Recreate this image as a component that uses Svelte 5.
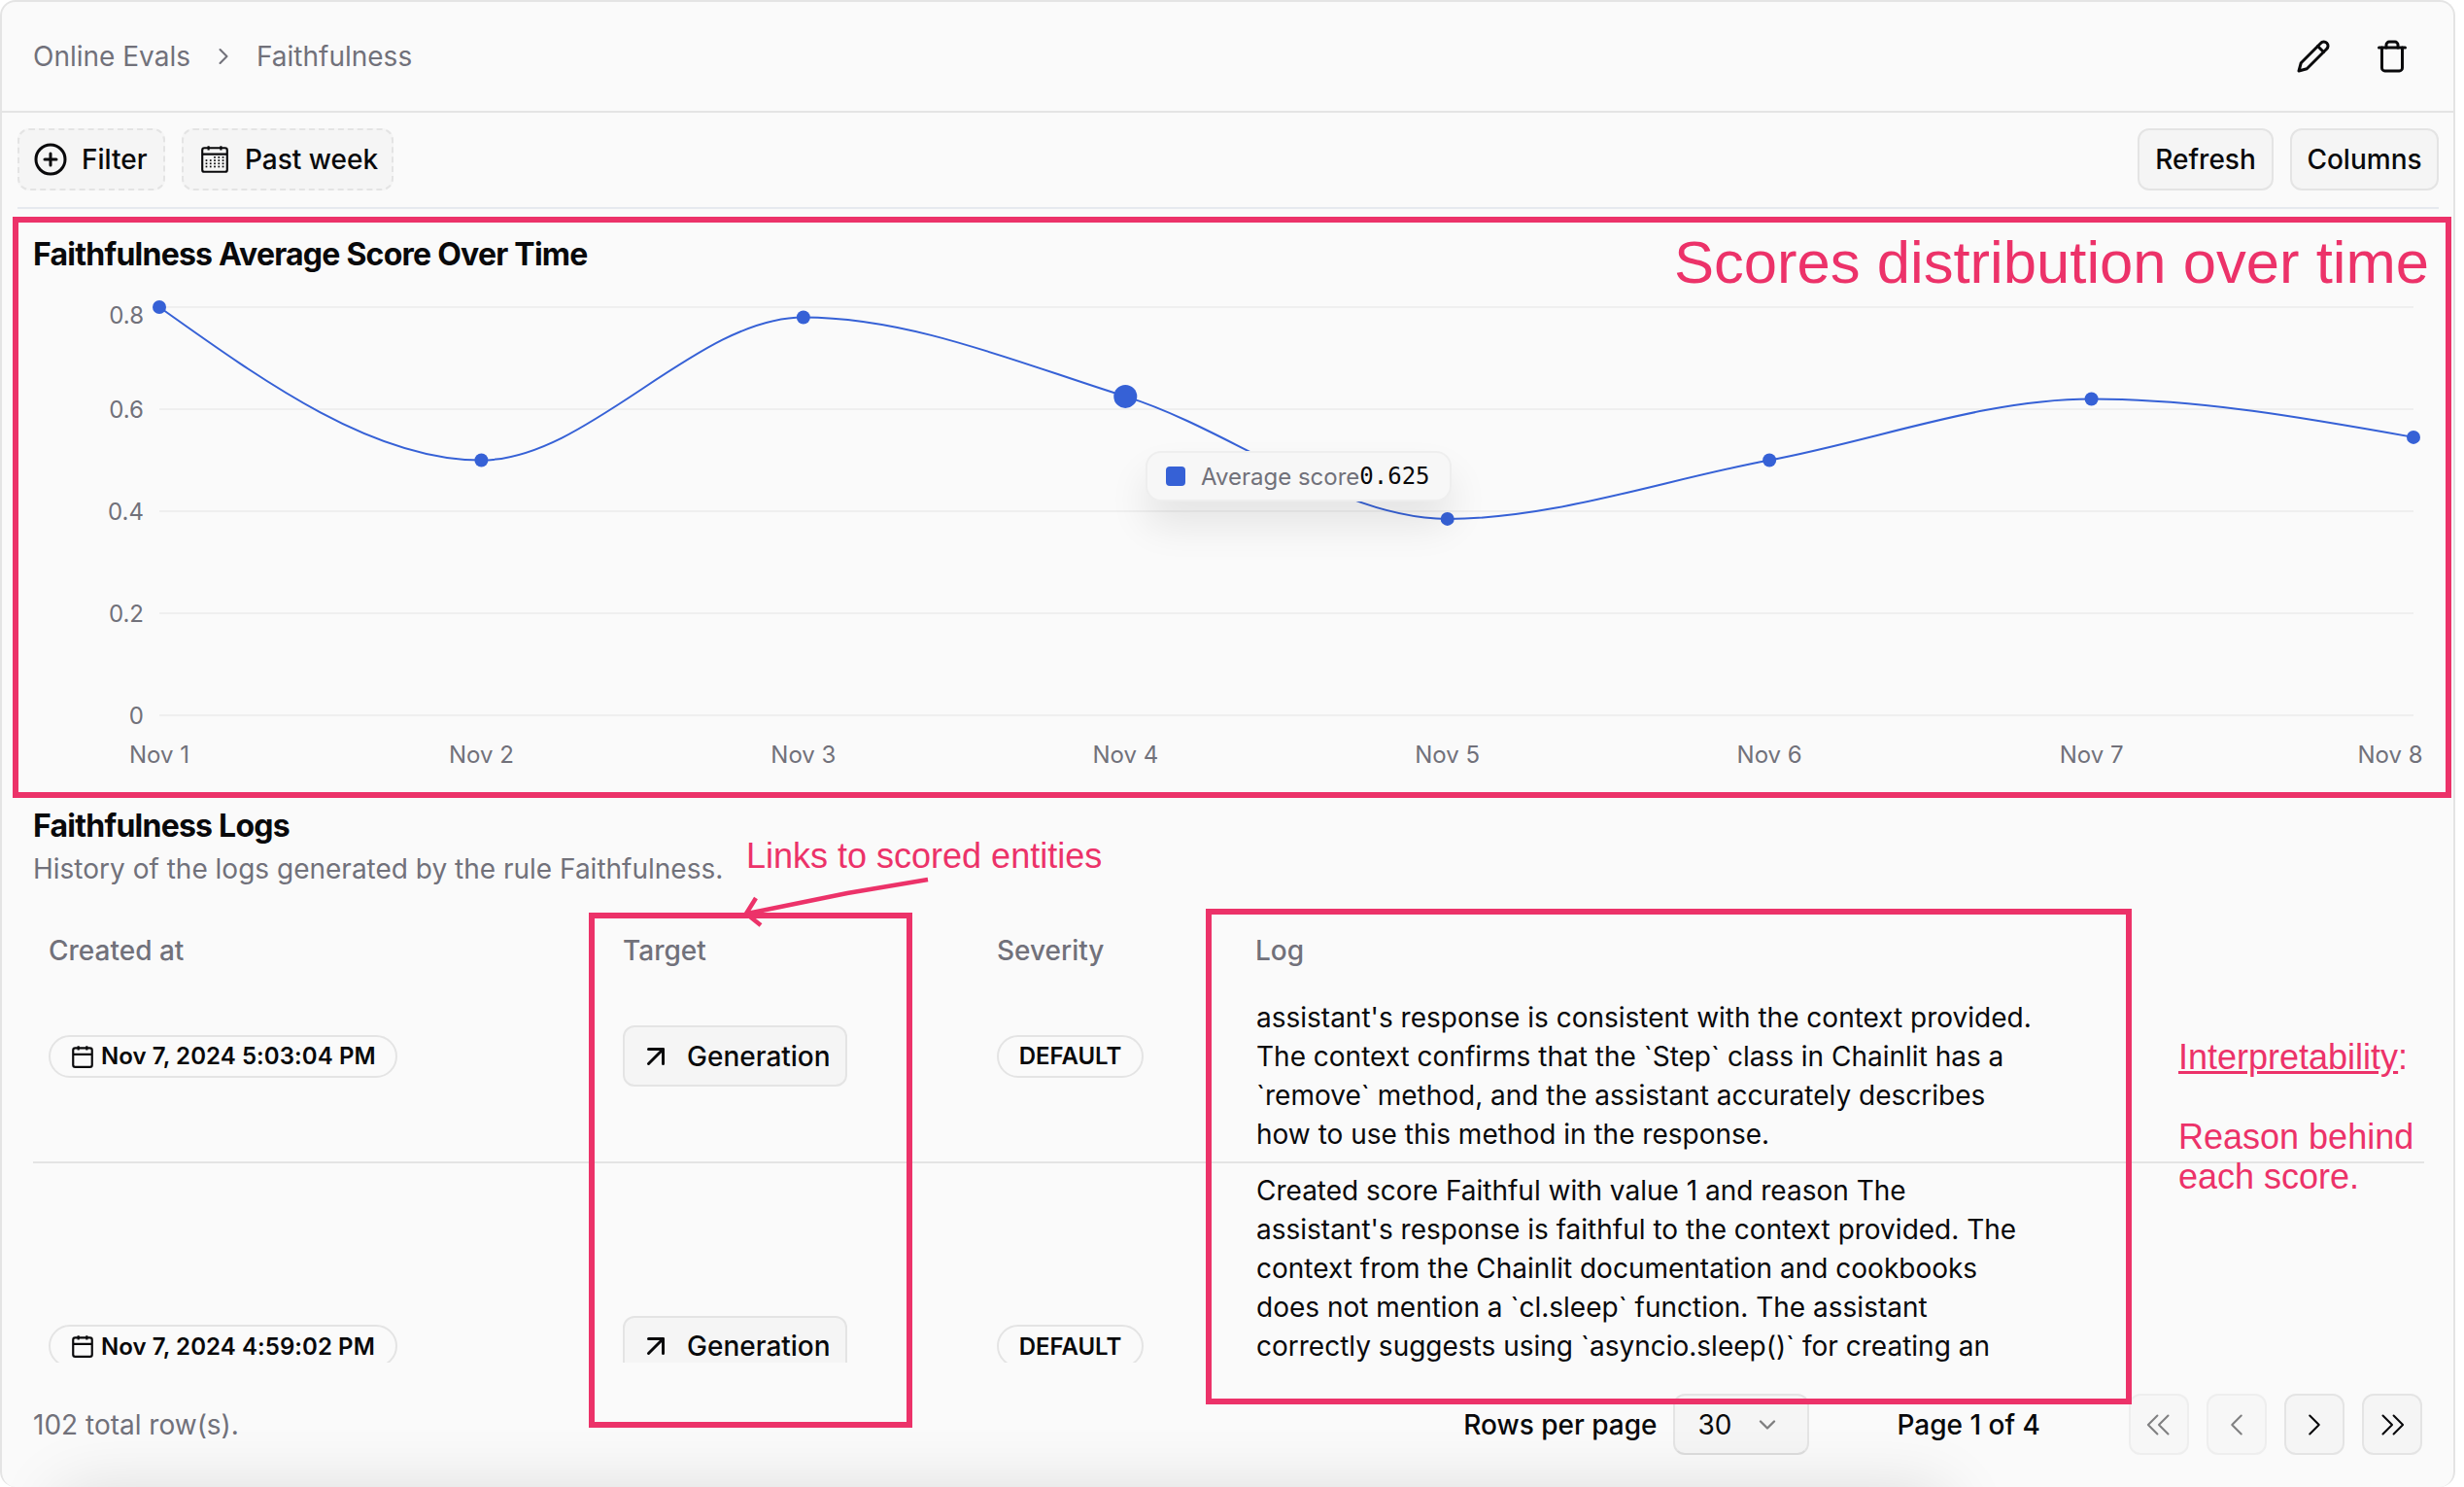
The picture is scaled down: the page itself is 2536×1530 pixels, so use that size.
<script>
  const data = [0.8, 0.5, 0.78, 0.625, 0.385, 0.5, 0.62, 0.545];
  const labels = ['Nov 1', 'Nov 2', 'Nov 3', 'Nov 4', 'Nov 5', 'Nov 6', 'Nov 7', 'Nov 8'];
  const X0 = 164, X1 = 2484, Y0 = 736, H = 525;
  const pts = data.map((v, i) => ({ x: X0 + ((X1 - X0) * i) / 7, y: Y0 - v * H }));
  const ticks = [
    { t: '0.8', y: 316, ly: 324 },
    { t: '0.6', y: 421, ly: 421 },
    { t: '0.4', y: 526, ly: 526 },
    { t: '0.2', y: 631, ly: 631 },
    { t: '0', y: 736, ly: 736 }
  ];
  function tangents(p) {
    const m = p.map(() => 0);
    for (let i = 1; i < p.length - 1; i++) {
      const h0 = p[i].x - p[i - 1].x, h1 = p[i + 1].x - p[i].x;
      const s0 = (p[i].y - p[i - 1].y) / h0, s1 = (p[i + 1].y - p[i].y) / h1;
      const q = (s0 * h1 + s1 * h0) / (h0 + h1);
      m[i] = (Math.sign(s0) + Math.sign(s1)) * Math.min(Math.abs(s0), Math.abs(s1), 0.5 * Math.abs(q));
    }
    const n = p.length - 1;
    m[0] = (3 * (p[1].y - p[0].y) / (p[1].x - p[0].x) - m[1]) / 2;
    m[n] = (3 * (p[n].y - p[n - 1].y) / (p[n].x - p[n - 1].x) - m[n - 1]) / 2;
    return m;
  }
  const m = tangents(pts);
  let line = `M${pts[0].x},${pts[0].y}`;
  for (let i = 0; i < pts.length - 1; i++) {
    const a = pts[i], b = pts[i + 1], dx = (b.x - a.x) / 3;
    line += `C${a.x + dx},${a.y + dx * m[i]} ${b.x - dx},${b.y - dx * m[i + 1]} ${b.x},${b.y}`;
  }
  const dots = [];
  for (let r = 0; r < 4; r++) for (let c = 0; c < 5; c++) if (r > 0 || c > 1) dots.push({ x: 3.5 + c * 2, y: 6.5 + r * 1.5 });
</script>

<div class="page">
  <div class="card">
    <header class="top">
      <nav class="crumbs">
        <span>Online Evals</span>
        <svg class="chev" viewBox="0 0 24 24"><path d="m9 18 6-6-6-6" /></svg>
        <span>Faithfulness</span>
      </nav>
      <div class="actions">
        <svg class="ic" viewBox="0 0 24 24"><path d="M17 3a2.85 2.83 0 1 1 4 4L7.5 20.5 2 22l1.5-5.5Z" /><path d="m15 5 4 4" /></svg>
        <svg class="ic" viewBox="0 0 24 24"><path d="M3 6h18" /><path d="M19 6v14c0 1-1 2-2 2H7c-1 0-2-1-2-2V6" /><path d="M8 6V4c0-1 1-2 2-2h4c1 0 2 1 2 2v2" /></svg>
      </div>
    </header>

    <div class="toolbar">
      <button class="btn dashed filter">
        <svg class="ic" viewBox="0 0 24 24"><circle cx="12" cy="12" r="10" /><path d="M8 12h8" /><path d="M12 8v8" /></svg>
        Filter
      </button>
      <button class="btn dashed past">
        <svg class="cal" viewBox="0 0 15 15">
          <rect x="1.5" y="2" width="12" height="11.5" rx="1" />
          <path d="M1.5 5h12M4.5 1v2M10.5 1v2" />
          {#each dots as d}<rect class="dot" x={d.x - 0.4} y={d.y - 0.4} width="0.8" height="0.8" />{/each}
        </svg>
        Past week
      </button>
      <span class="spacer"></span>
      <button class="btn refresh">Refresh</button>
      <button class="btn columns">Columns</button>
    </div>

    <section class="chart">
      <h2 class="title">Faithfulness Average Score Over Time</h2>
      <div class="plot">
        <svg class="plot-svg" viewBox="2 290 2523 510" width="2523" height="510">
          {#each ticks as t}
            <line class="grid" x1={X0} x2={X1} y1={t.y} y2={t.y} />
            <text class="axis" x="148" y={t.ly} text-anchor="end" dominant-baseline="central">{t.t}</text>
          {/each}
          {#each labels as l, i}
            <text class="axis" x={i === 7 ? 2460 : pts[i].x} y="776" text-anchor="middle" dominant-baseline="central">{l}</text>
          {/each}
          <path class="curve" d={line} />
          {#each pts as p, i}
            <circle class="pt" cx={p.x} cy={p.y} r={i === 3 ? 12 : 7} />
          {/each}
        </svg>
        <div class="tip">
          <span class="swatch"></span>
          <span class="tip-l">Average score</span><span class="tip-v">0.625</span>
        </div>
      </div>
    </section>

    <section class="logs">
      <h2 class="title">Faithfulness Logs</h2>
      <p class="sub">History of the logs generated by the rule Faithfulness.</p>

      <div class="row head">
        <div class="c">Created at</div>
        <div class="c">Target</div>
        <div class="c">Severity</div>
        <div class="c">Log</div>
      </div>

      <div class="viewport">
        <div class="row r1">
          <div class="c mid"><span class="pill date"><svg class="dcal" viewBox="0 0 24 24"><rect x="3" y="4" width="18" height="18" rx="2" /><path d="M16 2v4M8 2v4M3 10h18" /></svg>Nov 7, 2024 5:03:04 PM</span></div>
          <div class="c mid"><button class="btn gen"><svg class="ic" viewBox="0 0 24 24"><path d="M7 7h10v10" /><path d="M7 17 17 7" /></svg>Generation</button></div>
          <div class="c mid"><span class="pill sev">DEFAULT</span></div>
          <div class="c log">assistant's response is consistent with the context provided.<br />The context confirms that the `Step` class in Chainlit has a<br />`remove` method, and the assistant accurately describes<br />how to use this method in the response.</div>
        </div>
        <div class="row r2">
          <div class="c mid"><span class="pill date"><svg class="dcal" viewBox="0 0 24 24"><rect x="3" y="4" width="18" height="18" rx="2" /><path d="M16 2v4M8 2v4M3 10h18" /></svg>Nov 7, 2024 4:59:02 PM</span></div>
          <div class="c mid"><button class="btn gen"><svg class="ic" viewBox="0 0 24 24"><path d="M7 7h10v10" /><path d="M7 17 17 7" /></svg>Generation</button></div>
          <div class="c mid"><span class="pill sev">DEFAULT</span></div>
          <div class="c log">Created score Faithful with value 1 and reason The<br />assistant's response is faithful to the context provided. The<br />context from the Chainlit documentation and cookbooks<br />does not mention a `cl.sleep` function. The assistant<br />correctly suggests using `asyncio.sleep()` for creating an</div>
        </div>
      </div>

      <footer class="foot">
        <span class="total">102 total row(s).</span>
        <span class="rpp">Rows per page</span>
        <button class="btn select">30<svg class="ic small" viewBox="0 0 24 24"><path d="m6 9 6 6 6-6" /></svg></button>
        <span class="pg">Page 1 of 4</span>
        <div class="pager">
          <button class="btn sq off"><svg class="ic thin" viewBox="0 0 24 24"><path d="m11 18-6-6 6-6" /><path d="m18 18-6-6 6-6" /></svg></button>
          <button class="btn sq off"><svg class="ic thin" viewBox="0 0 24 24"><path d="m15 18-6-6 6-6" /></svg></button>
          <button class="btn sq"><svg class="ic thin" viewBox="0 0 24 24"><path d="m9 18 6-6-6-6" /></svg></button>
          <button class="btn sq"><svg class="ic thin" viewBox="0 0 24 24"><path d="m6 18 6-6-6-6" /><path d="m13 18 6-6-6-6" /></svg></button>
        </div>
      </footer>
    </section>
    <div class="glow"></div>
  </div>

  <div class="box b1"></div>
  <div class="box b2"></div>
  <div class="box b3"></div>
  <svg class="arrow" viewBox="760 895 200 65" width="200" height="65">
    <path d="M955 905L872 919L769 940" />
    <path d="M778 924L768 940L783 952" />
  </svg>
  <div class="note n1">Scores distribution over time</div>
  <div class="note n2">Links to scored entities</div>
  <div class="note n3"><u>Interpretability</u>:<br /><br />Reason behind<br />each score.</div>
</div>

<style>
  :global(body) {
    margin: 0;
    background: #fff;
  }
  .page {
    position: relative;
    width: 2536px;
    height: 1530px;
    overflow: hidden;
    font-family: Inter, "Liberation Sans", sans-serif;
    font-size: 28px;
    color: #09090b;
  }
  .card {
    position: relative;
    box-sizing: border-box;
    width: 2527px;
    height: 1530px;
    overflow: hidden;
    background: #fafafa;
    border: 2px solid #e4e4e4;
    border-bottom: 0;
    border-radius: 16px;
  }
  .top {
    box-sizing: border-box;
    height: 114px;
    border-bottom: 2px solid #e4e4e4;
    display: flex;
    align-items: center;
    justify-content: space-between;
    padding: 0 45px 0 32px;
  }
  .crumbs {
    display: flex;
    align-items: center;
    gap: 20px;
    color: #71717a;
  }
  .chev {
    width: 28px;
    height: 28px;
    fill: none;
    stroke: #71717a;
    stroke-width: 1.8;
    stroke-linecap: round;
    stroke-linejoin: round;
  }
  .actions {
    display: flex;
    gap: 45px;
  }
  .ic {
    width: 36px;
    height: 36px;
    flex: none;
    fill: none;
    stroke: #09090b;
    stroke-width: 2;
    stroke-linecap: round;
    stroke-linejoin: round;
  }
  .toolbar {
    box-sizing: border-box;
    height: 99px;
    margin: 0 15px 0 16px;
    padding-top: 16px;
    display: flex;
    align-items: flex-start;
    gap: 17px;
    border-bottom: 2px solid #e6e9ef;
  }
  .spacer {
    flex: 1;
  }
  .btn {
    box-sizing: border-box;
    height: 64px;
    display: inline-flex;
    align-items: center;
    justify-content: center;
    background: #f5f5f5;
    border: 2px solid #e4e4e4;
    border-radius: 12px;
    font: 500 28px Inter, sans-serif;
    color: #09090b;
    padding: 0;
  }
  .dashed {
    border-style: dashed;
    justify-content: flex-start;
  }
  .filter {
    width: 152px;
    padding-left: 14px;
    gap: 14px;
  }
  .past {
    width: 218px;
    padding-left: 16px;
    gap: 15px;
  }
  .cal {
    width: 32px;
    height: 32px;
    flex: none;
    fill: none;
    stroke: #09090b;
    stroke-width: 1;
  }
  .dot {
    fill: #09090b;
    stroke: none;
  }
  .refresh {
    width: 140px;
  }
  .columns {
    width: 153px;
  }
  .chart {
    padding-top: 25px;
  }
  .title {
    margin: 0 0 0 32px;
    font-size: 32px;
    line-height: 44px;
    font-weight: 700;
    letter-spacing: -0.76px;
  }
  .plot {
    position: relative;
    margin-top: 6px;
    height: 510px;
  }
  .plot-svg {
    display: block;
  }
  .grid {
    stroke: #efefef;
    stroke-width: 2;
  }
  .axis {
    font-size: 24px;
    fill: #71717a;
  }
  .curve {
    fill: none;
    stroke: #3661d6;
    stroke-width: 2;
  }
  .pt {
    fill: #3661d6;
  }
  .tip {
    position: absolute;
    left: 1177px;
    top: 174px;
    box-sizing: border-box;
    width: 315px;
    height: 52px;
    display: flex;
    align-items: center;
    padding-left: 19px;
    background: #f7f7f7;
    border: 2px solid #eeeeee;
    border-radius: 16px;
    box-shadow: 0 24px 40px rgba(0, 0, 0, 0.09);
    font-size: 24px;
  }
  .swatch {
    width: 20px;
    height: 20px;
    border-radius: 4px;
    background: #3661d6;
    margin-right: 16px;
  }
  .tip-l {
    color: #71717a;
  }
  .tip-v {
    font-family: "DejaVu Sans Mono", monospace;
    color: #09090b;
  }
  .logs {
    margin-top: 28px;
  }
  .sub {
    margin: 2px 0 24px 32px;
    line-height: 40px;
    color: #71717a;
  }
  .row {
    display: grid;
    grid-template-columns: 591px 385px 266px 1fr;
    margin: 0 30px 0 32px;
    padding-left: 0;
  }
  .c {
    padding-left: 16px;
  }
  .head {
    height: 80px;
    align-items: center;
    color: #71717a;
    font-weight: 500;
  }
  .viewport {
    height: 384px;
    overflow: hidden;
  }
  .r1 {
    box-sizing: border-box;
    height: 179px;
    border-bottom: 2px solid #e4e4e4;
  }
  .r2 {
    height: 376px;
  }
  .mid {
    display: flex;
    align-items: center;
  }
  .r1 .mid {
    padding-bottom: 40px;
  }
  .log {
    line-height: 40px;
    padding-top: 9px;
    padding-left: 17px;
  }
  .r2 .log {
    padding-top: 8px;
  }
  .pill {
    box-sizing: border-box;
    height: 44px;
    display: inline-flex;
    align-items: center;
    border: 2px solid #e4e4e4;
    border-radius: 22px;
    font-size: 24px;
    font-weight: 600;
    background: #fafafa;
  }
  .date {
    width: 359px;
    padding-left: 20px;
    gap: 6px;
    letter-spacing: 0.08px;
  }
  .dcal {
    width: 26px;
    height: 26px;
    flex: none;
    fill: none;
    stroke: #09090b;
    stroke-width: 2;
  }
  .sev {
    width: 151px;
    justify-content: center;
  }
  .gen {
    width: 231px;
    height: 63px;
    justify-content: flex-start;
    padding-left: 14px;
    gap: 14px;
  }
  .foot {
    margin: 32px 32px 0 32px;
    height: 63px;
    display: flex;
    align-items: center;
  }
  .total {
    color: #71717a;
    flex: 1;
  }
  .rpp {
    font-weight: 500;
    margin-right: 16px;
  }
  .select {
    width: 140px;
    height: 63px;
    justify-content: flex-start;
    padding-left: 24px;
    gap: 22px;
    font-weight: 400;
    border-bottom-color: #dddddd;
  }
  .small {
    width: 28px;
    height: 28px;
    opacity: 0.5;
  }
  .pg {
    margin: 0 91px;
    font-weight: 500;
  }
  .pager {
    display: flex;
    gap: 18px;
  }
  .sq {
    width: 62px;
    height: 63px;
  }
  .off {
    opacity: 0.5;
  }
  .thin {
    width: 38px;
    height: 38px;
    stroke-width: 1.3;
  }
  .glow {
    position: absolute;
    left: 70px;
    width: 1920px;
    top: 1545px;
    height: 100px;
    box-shadow: 0 0 70px 10px rgba(0, 0, 0, 0.14);
  }
  .box {
    position: absolute;
    box-sizing: border-box;
    border: 6px solid #ec3269;
  }
  .b1 {
    left: 13px;
    top: 223px;
    width: 2510px;
    height: 598px;
  }
  .b2 {
    left: 606px;
    top: 939px;
    width: 333px;
    height: 530px;
  }
  .b3 {
    left: 1241px;
    top: 935px;
    width: 953px;
    height: 510px;
  }
  .arrow {
    position: absolute;
    left: 760px;
    top: 895px;
    fill: none;
    stroke: #ec3269;
    stroke-width: 4.5;
  }
  .note {
    position: absolute;
    font-family: "Liberation Sans", Arial, sans-serif;
    color: #ec3269;
    white-space: nowrap;
  }
  .n1 {
    right: 36px;
    top: 234px;
    font-size: 61.6px;
    line-height: 72px;
  }
  .n2 {
    left: 768px;
    top: 860px;
    font-size: 36px;
    line-height: 42px;
  }
  .n3 {
    left: 2242px;
    top: 1067px;
    font-size: 36px;
    line-height: 41px;
  }
</style>
